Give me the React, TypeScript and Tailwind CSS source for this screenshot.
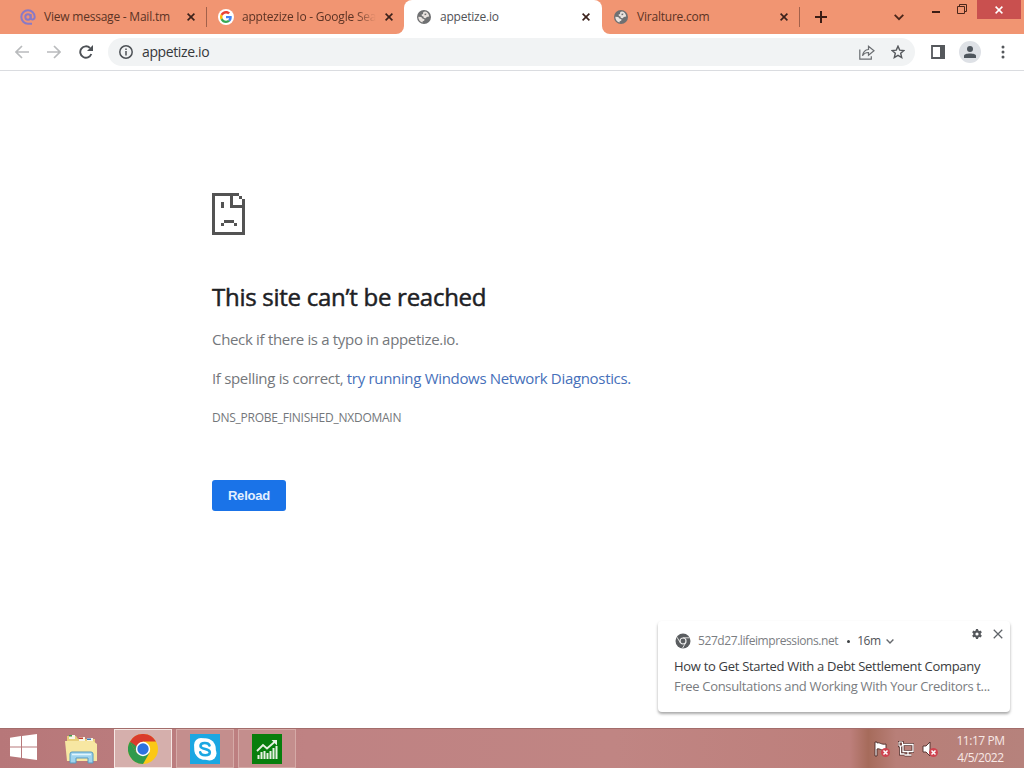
import React from "react";

const CloseIcon = ({ className, size = 8, width = 1.6 }: { className?: string; size?: number; width?: number }) => (
  <svg className={className} width={size} height={size} viewBox="0 0 8 8" stroke="currentColor" strokeWidth={width}>
    <path d="M.6.6l6.8 6.8M7.4.6L.6 7.4" />
  </svg>
);

const GlobeIcon = () => (
  <svg width="14" height="14" viewBox="0 0 14 14" className="m-px">
    <circle cx="7" cy="7" r="7" fill="#6f7072" />
    <path d="M8.200 1.500C6 1.800 5.600 3 6.200 3.900L4.600 4.600 4.900 6l1.600.4.300 1.500 2.100.4.800-1.300 2.500-.4C12 3.800 10.500 2 8.200 1.500z" fill="#e9e3df" />
    <path d="M1.300 6.800l2.900.2 1.300 1.600 2 .6-.3 1.500-1.500.5-.2 1.400C3 12 1.300 9.800 1.300 6.800z" fill="#e9e3df" />
    <path d="M7.500 3.700l1.900-.2-.3 1.400-1.500.4z" fill="#6f7072" />
  </svg>
);

const GoogleIcon = () => (
  <span className="flex size-4 items-center justify-center rounded-full bg-white">
    <svg width="12" height="12" viewBox="0 0 48 48">
      <path fill="#EA4335" d="M24 9.500c3.500 0 6.700 1.200 9.200 3.600l6.900-6.900C35.900 2.400 30.500 0 24 0 14.600 0 6.500 5.400 2.600 13.200l8 6.200C12.400 13.700 17.700 9.500 24 9.500z" />
      <path fill="#4285F4" d="M47 24.600c0-1.600-.2-3.100-.4-4.600H24v9h12.900c-.6 3-2.200 5.500-4.700 7.200l7.700 6C44.400 38 47 31.800 47 24.600z" />
      <path fill="#FBBC05" d="M10.500 28.600c-.5-1.500-.8-3-.8-4.600s.3-3.100.8-4.600l-8-6.200C.9 16.500 0 20.100 0 24s.9 7.500 2.600 10.800z" />
      <path fill="#34A853" d="M24 48c6.500 0 11.900-2.100 15.900-5.800l-7.700-6c-2.200 1.500-4.900 2.300-8.200 2.300-6.300 0-11.600-4.200-13.500-9.900l-8 6.200C6.500 42.600 14.600 48 24 48z" />
    </svg>
  </span>
);

const MailIcon = () => (
  <svg width="16" height="16" viewBox="0 0 16 16" fill="none" stroke="#8979c6" strokeWidth="2">
    <circle cx="8" cy="8" r="2.700" />
    <path d="M10.700 5v4c0 2.200 4 2 4-1A6.700 6.700 0 1 0 8 14.700h4" />
  </svg>
);

type TabProps = {
  icon: React.ReactNode;
  title: string;
  titleClass?: string;
  separator?: boolean;
};

const Tab = ({ icon, title, titleClass = "text-[#5b3324]", separator }: TabProps) => (
  <div className="flex h-full w-[198px] shrink-0 items-center pl-3">
    {icon}
    <span className={`ml-2 w-[134px] whitespace-nowrap text-xs tracking-[-0.22px] ${titleClass}`}>{title}</span>
    <CloseIcon className="ml-[9px] text-[#3b211b]" />
    {separator && <span className="-mr-px ml-auto h-5 w-px bg-[#a2614b]" />}
  </div>
);

const TabStrip = () => (
  <div className="flex h-[34px] bg-white">
    <div className="flex w-[404px] rounded-br-lg bg-[#f19572] pl-2">
      <Tab icon={<MailIcon />} title="View message - Mail.tm" separator />
      <Tab
        icon={<GoogleIcon />}
        title="apptezize Io - Google Sea"
        titleClass="text-[#5b3324] [mask-image:linear-gradient(to_right,black_85%,transparent)]"
      />
    </div>
    <div className="w-[198px] bg-[#f19572]">
      <div className="h-full rounded-t-lg bg-white">
        <div className="h-full [&_svg:last-child]:-translate-x-px">
          <Tab icon={<GlobeIcon />} title="appetize.io" titleClass="text-[#505256]" />
        </div>
      </div>
    </div>
    <div className="flex flex-1 rounded-bl-lg bg-[#f19572]">
      <div className="-ml-px flex">
        <Tab icon={<GlobeIcon />} title="Viralture.com" separator />
      </div>
      <svg className="mt-[11px] ml-4" width="12" height="12" viewBox="0 0 12 12" stroke="#3b1d15" strokeWidth="2">
        <path d="M6 0v12M0 6h12" />
      </svg>
      <svg className="mt-3.5 ml-[67px]" width="10" height="7" viewBox="0 0 10 7" fill="none" stroke="#4b261a" strokeWidth="1.800">
        <path d="M.7.8 5 5.200 9.300.8" />
      </svg>
      <span className="mt-[11px] ml-7 h-0.5 w-2 bg-[#3b1d15]" />
      <svg className="mt-1 ml-[17px]" width="10" height="10" viewBox="0 0 10 10" fill="none" stroke="#4b261a">
        <path d="M.5 2.500h7v7h-7zM2.500 2.500v-2h7v7h-2" />
      </svg>
      <div className="ml-[10px] flex h-[19px] w-[44px] items-center justify-center bg-[#c9504f] text-white">
        <CloseIcon width={1.500} />
      </div>
    </div>
  </div>
);

const Toolbar = () => (
  <div className="flex h-[37px] items-center border-b border-[#dadce0] bg-white pl-[15px]">
    <svg width="14" height="14" viewBox="0 0 14 14" fill="none" stroke="#b9bbbd" strokeWidth="1.700">
      <path d="M14 7H1.500M7 1 1 7l6 6" />
    </svg>
    <svg className="ml-[18px]" width="14" height="14" viewBox="0 0 14 14" fill="none" stroke="#b9bbbd" strokeWidth="1.700">
      <path d="M0 7h12.500M7 1l6 6-6 6" />
    </svg>
    <svg className="ml-[18px]" width="14" height="14" viewBox="0 0 14 14">
      <path d="M12.300 9A5.700 5.700 0 1 1 11 3" fill="none" stroke="#4d5156" strokeWidth="1.900" />
      <path d="M14 0v6H8z" fill="#4d5156" />
    </svg>
    <div className="ml-[15px] flex h-7 w-[807px] items-center rounded-full bg-[#f1f3f4] pl-[11px]">
      <svg width="14" height="14" viewBox="0 0 14 14" fill="none" stroke="#4d5156" strokeWidth="1.500">
        <circle cx="7" cy="7" r="6.200" />
        <path d="M7 6v4.500M7 3.500V5" />
      </svg>
      <span className="ml-[9px] text-sm tracking-[-0.38px] text-[#36383b]">appetize.io</span>
      <svg className="mr-px ml-auto" width="16" height="15" viewBox="0 0 16 15" fill="none" stroke="#6a6d71" strokeWidth="1.200">
        <path d="M.8 4.500v9.700h11.500v-3M9.500 4.500V1.300L15 5.800l-5.500 4.500V7.500C7 7.400 5 8.300 3.500 10.800 4 7.300 6 4.800 9.500 4.500z" />
      </svg>
      <svg className="mr-2.5 ml-[15px]" width="14" height="14" viewBox="0 0 14 14" fill="none" stroke="#55585c" strokeWidth="1.400">
        <path d="m7 1.200 1.700 3.900 4.200.4-3.200 2.800 1 4.200L7 10.300l-3.700 2.200 1-4.200-3.200-2.800 4.200-.4z" />
      </svg>
    </div>
    <svg className="ml-4" width="14" height="14" viewBox="0 0 14 14">
      <path d="M1 1h12v12H1z" fill="none" stroke="#55585c" strokeWidth="1.800" />
      <path d="M9 0h5v14H9z" fill="#55585c" />
    </svg>
    <span className="ml-[14px] flex size-[22px] items-center justify-center rounded-full bg-[#dee1e6]">
      <svg width="12" height="12" viewBox="0 0 12 12" fill="#4f565e">
        <circle cx="6" cy="3" r="3" />
        <path d="M0 12V9.700C0 6.600 12 6.600 12 9.700V12z" />
      </svg>
    </span>
    <svg className="ml-[19.500px]" width="4" height="14" viewBox="0 0 4 14" fill="#55585c">
      <circle cx="2" cy="2" r="1.500" />
      <circle cx="2" cy="7" r="1.500" />
      <circle cx="2" cy="12" r="1.500" />
    </svg>
  </div>
);

const SadPage = () => (
  <svg width="33" height="42" viewBox="0 0 33 42" fill="#535353" shapeRendering="crispEdges">
    <path d="M0 0h27v3h-6v9h12v30H0zM3 3v36h27V15H18V3z" fillRule="evenodd" />
    <path d="M27 3h3v3h-3zM30 6h3v9h-3zM9 9h3v6H9zM12 27h10v3H12zM9 30h3v3H9zM22 30h3v3h-3z" />
  </svg>
);

const Notification = () => (
  <div className="absolute top-[550px] left-[658px] h-[91px] w-[352px] rounded-sm bg-white shadow-[0_2px_3px_rgba(0,0,0,0.35)]">
    <div className="flex h-[24px] items-end pl-[17px]">
      <svg className="-mb-1" width="16" height="16" viewBox="0 0 16 16">
        <circle cx="8" cy="8" r="7.500" fill="#5a5d60" />
        <circle cx="8" cy="8" r="3" fill="none" stroke="#eee" strokeWidth="1.200" />
        <path d="M8 4.800h6.600M5.200 9.600 2 4.200M10.800 9.600 7.500 15.200" stroke="#ddd" />
      </svg>
      <span className="-mb-1 ml-[7px] text-xs leading-4 tracking-[-0.42px] text-[#7b7e82]">527d27.lifeimpressions.net</span>
      <span className="mb-0.5 ml-[9px] size-[3px] rounded-full bg-[#3c4043]" />
      <span className="-mb-1 ml-[7px] text-xs leading-4 tracking-[-0.4px] text-[#505357]">16m</span>
      <svg className="mb-px ml-[5px]" width="8" height="5" viewBox="0 0 8 5" fill="none" stroke="#66696d" strokeWidth="1.400">
        <path d="m.6.6 3.400 3.400L7.400.6" />
      </svg>
      <svg className="mb-1.5 ml-auto" width="10" height="10" viewBox="0 0 10 10">
        <circle cx="5" cy="5" r="2.700" fill="none" stroke="#55585c" strokeWidth="2.200" />
        <path d="M5 0v2M5 8v2M.7 2.500l1.700 1M7.600 6.500l1.700 1M.7 7.500l1.700-1M7.600 3.500l1.700-1" stroke="#55585c" strokeWidth="2.200" />
      </svg>
      <CloseIcon className="mr-[7px] mb-1.5 ml-[11px] text-[#5f6368]" size={10} width={1} />
    </div>
    <p className="mt-3 ml-4 text-[13px] leading-[18px] tracking-[-0.3px] whitespace-nowrap text-[#3a3c40]">How to Get Started With a Debt Settlement Company</p>
    <p className="mt-0.5 ml-4 text-[13px] leading-[18px] tracking-[-0.33px] whitespace-nowrap text-[#797c80]">Free Consultations and Working With Your Creditors t...</p>
  </div>
);

const ErrorPage = () => (
  <main className="relative h-[657px] bg-white pt-[122px] pl-[212px]">
    <SadPage />
    <h1 className="mt-[47px] text-2xl leading-[30px] tracking-[-0.27px] text-[#202124] [-webkit-text-stroke:0.5px_#202124]">This site can’t be reached</h1>
    <p className="mt-4 text-[15px] leading-[22px] tracking-[-0.32px] text-[#74777b]">Check if there is a typo in appetize.io.</p>
    <p className="mt-[17px] text-[15px] leading-[22px] tracking-[-0.32px] text-[#74777b]">
      If spelling is correct, <a className="text-[#4670ba]">try running Windows Network Diagnostics.</a>
    </p>
    <p className="mt-[19px] text-xs leading-5 tracking-[-0.25px] text-[#74777b]">DNS_PROBE_FINISHED_NXDOMAIN</p>
    <button className="mt-[52px] h-[31px] w-[74px] rounded-[3px] bg-[#1a73e8] font-['Liberation_Sans'] text-[13px] font-bold tracking-[-0.2px] text-[#e3f0ff]">
      Reload
    </button>
    <Notification />
  </main>
);

const WindowsLogo = () => (
  <svg width="27" height="26" viewBox="0 0 27 26" fill="#fff">
    <path d="M0 3.800 11 2.100v10.300H0zM12 1.900 27 0v12.400H12zM0 13.400h11v10.400L0 22.300zM12 13.400h15V26l-15-2z" />
  </svg>
);

const ExplorerIcon = () => (
  <svg width="34" height="30" viewBox="0 0 34 30">
    <path d="M2 2h9l2 3h17v21H2z" fill="#e8ce79" />
    <path d="M4 1h6v4H4zM14 3h6v4h-6zM22 4h6v4h-6z" fill="#f7f4e4" />
    <path d="M4 1h3v1.500H4z" fill="#3e9b4c" />
    <path d="M14 3.500h4V5h-4z" fill="#c43f2f" />
    <path d="M22 4.500h4V6h-4z" fill="#3b79b9" />
    <path d="M0 7h28l4 3v17H2z" fill="#f7e7a2" />
    <path d="M5 29V20q0-2 2-2h19q2 0 2 2v9h-5v-5H11v5z" fill="#9fd4ee" stroke="#5799c0" />
    <path d="M7 20.500h19" stroke="#e1f5fd" strokeWidth="1.500" />
  </svg>
);

const ChromeIcon = () => (
  <svg width="30" height="30" viewBox="0 0 30 30">
    <circle cx="15" cy="15" r="15" fill="#fbc816" />
    <path d="M15 15 2 7.500A15 15 0 0 1 28 7.500H15z" fill="#da3b2c" />
    <path d="M2 7.500A15 15 0 0 0 15 30l6.500-11.200L15 15 8.500 18.800z" fill="#2f9a4c" />
    <path d="M2 7.500 8.500 18.800 15 15V7.500z" fill="#da3b2c" />
    <path d="M2 7.500 8.500 18.800 12 15z" fill="#2f9a4c" />
    <circle cx="15" cy="15" r="7.200" fill="#fff" />
    <circle cx="15" cy="15" r="5.700" fill="#2c72df" />
  </svg>
);

const SkypeIcon = () => (
  <svg width="30" height="30" viewBox="0 0 30 30">
    <path d="M0 0h30v30H0z" fill="#1ba7e2" />
    <circle cx="11" cy="11" r="7" fill="#fff" />
    <circle cx="19.500" cy="19.500" r="7" fill="#fff" />
    <circle cx="15" cy="15" r="10.800" fill="#fff" />
    <path d="M19.500 11.500C18.500 8.200 10.500 8 10.500 12c0 4 9.300 2.200 9.300 6.200 0 4-8.800 4-9.600.1" fill="none" stroke="#1ba7e2" strokeWidth="2.600" strokeLinecap="round" />
  </svg>
);

const ChartIcon = () => (
  <svg width="30" height="30" viewBox="0 0 30 30">
    <path d="M0 0h30v30H0z" fill="#087e0d" />
    <path d="M6.500 25v-4M9.500 25v-7M12.500 25v-8M15.500 25v-6M18.500 25v-8M21.500 25V14M24.500 25V12" stroke="#e8f2e3" strokeWidth="2" />
    <path d="m5 17 6-6 4 3.500L22.500 8" fill="none" stroke="#e8f2e3" strokeWidth="1.800" />
    <path d="M19.500 6H25v5.500z" fill="#e8f2e3" />
  </svg>
);

const RedCross = () => (
  <g>
    <circle cx="11.500" cy="11.500" r="4.500" fill="#cf4450" />
    <path d="m9.500 9.500 4 4M13.500 9.500l-4 4" stroke="#fff" strokeWidth="1.500" />
  </g>
);

const Tray = () => (
  <div className="ml-auto flex items-center">
    <svg width="16" height="16" viewBox="0 0 16 16">
      <path d="M1 1h2v1c3-1 4 2 9 1v6c-5 1-6-2-9-1v7H1z" fill="#fff" stroke="#4b2b28" strokeWidth=".9" />
      <RedCross />
    </svg>
    <svg className="ml-2" width="16" height="16" viewBox="0 0 16 16" fill="none">
      <path d="M5 3.500h10v7H5zM10 11v2.500M6.500 14h7M2.500 5v8h4" stroke="#59332f" strokeWidth="3" />
      <path d="M1 1h3.500v4H1z" stroke="#59332f" strokeWidth="2.500" />
      <path d="M5 3.500h10v7H5zM10 11v2.500M6.500 14h7M2.500 5v8h4" stroke="#fff" strokeWidth="1.300" />
      <path d="M1 1h3.500v4H1z" fill="#7b504b" stroke="#fff" />
    </svg>
    <svg className="ml-2" width="16" height="16" viewBox="0 0 16 16">
      <path d="M1 5h3l4-4v14l-4-4H1z" fill="#fff" stroke="#4b2b28" strokeWidth=".9" />
      <RedCross />
    </svg>
    <div className="mr-[19px] ml-[18px] w-[49px] text-center text-xs leading-[17px] tracking-[-0.45px] whitespace-nowrap text-[#f7e8e5]">
      <div>11:17 PM</div>
      <div>4/5/2022</div>
    </div>
  </div>
);

const Taskbar = () => (
  <footer className="flex h-10 items-center border-t border-[#a36d6b] bg-[linear-gradient(to_right,#b77779_0%,#bf8283_30%,#c08583_60%,#bd7f7b_83%,#a66b5b_84.800%,#b87f78_87.500%,#b6827c_100%)] pl-2.5">
    <div className="-mt-1">
      <WindowsLogo />
    </div>
    <div className="ml-7 w-[49px]">
      <ExplorerIcon />
    </div>
    <div className="flex h-[39px] w-[58px] items-center justify-center border border-[#f5e7e4] bg-[#d5afac]">
      <ChromeIcon />
    </div>
    <div className="ml-1 flex h-[39px] w-[58px] items-center justify-center border border-[#d5aaa7] bg-[#c48e8d]">
      <SkypeIcon />
    </div>
    <div className="ml-1 flex h-[39px] w-[58px] items-center justify-center border border-[#d5aaa7] bg-[#c48e8d]">
      <ChartIcon />
    </div>
    <Tray />
  </footer>
);

const App = () => (
  <div className="h-[768px] w-[1024px] overflow-hidden bg-white font-['Open_Sans',sans-serif]">
    <TabStrip />
    <Toolbar />
    <ErrorPage />
    <Taskbar />
  </div>
);

export default App;
